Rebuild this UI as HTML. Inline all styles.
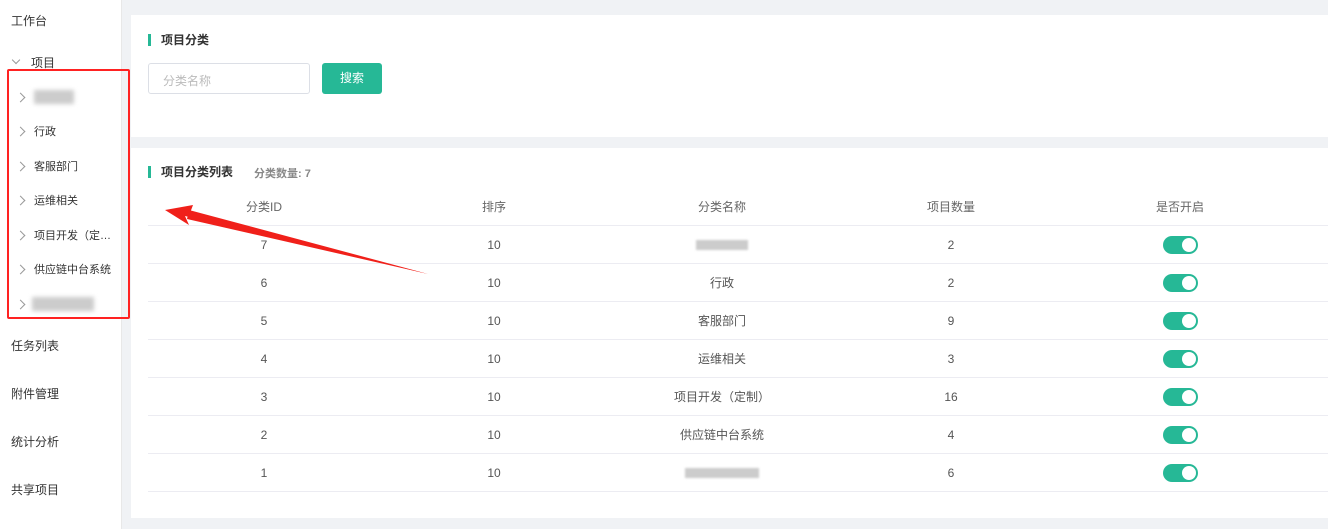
<!DOCTYPE html>
<html><head><meta charset="utf-8"><style>
*{margin:0;padding:0;box-sizing:border-box}
body{width:1328px;height:529px;overflow:hidden;background:#f0f2f5;font-family:"Liberation Sans","Noto Sans CJK SC",sans-serif;position:relative;color:#333}
.side{position:absolute;left:0;top:0;width:122px;height:529px;background:#fff;border-right:1px solid #e8e8e8}
.si{position:absolute;left:11px;font-size:12px;color:#333;line-height:16px}
.sub{position:absolute;left:34px;font-size:11px;color:#333;line-height:14px}
.chev{position:absolute;left:17px;width:7px;height:7px;border-right:1px solid #999;border-top:1px solid #999;transform:rotate(45deg)}
.blur{position:absolute;background:#ccc;filter:blur(2px)}
.card{position:absolute;left:131px;background:#fff;width:1197px}
.title{position:absolute;font-size:12px;font-weight:bold;color:#333;line-height:14px}
.bar{position:absolute;width:3px;height:12px;background:#26b896}
.row{position:absolute;left:148px;width:1180px;height:38px;border-bottom:1px solid #ececf2;font-size:12px;color:#555}
.row span{position:absolute;top:12px;line-height:14px;height:14px;transform:translateX(-50%);white-space:nowrap}
.row span i{vertical-align:top;margin-top:2px}
.tg{position:absolute;left:1015px;top:10px;width:35px;height:18px;border-radius:9px;background:#26b896}
.tg:after{content:"";position:absolute;right:2px;top:2px;width:14px;height:14px;border-radius:50%;background:#fff}
</style></head><body>
<div class="side">
<div class="si" style="top:13px">工作台</div>
<div style="position:absolute;left:13px;top:57px;width:6px;height:6px;border-right:1px solid #999;border-bottom:1px solid #999;transform:rotate(45deg)"></div>
<div class="si" style="top:55px;left:31px">项目</div>
<div class="chev" style="top:94px"></div><div class="blur" style="left:34px;top:90px;width:40px;height:14px"></div>
<div class="chev" style="top:128px"></div><div class="sub" style="top:125px">行政</div>
<div class="chev" style="top:163px"></div><div class="sub" style="top:160px">客服部门</div>
<div class="chev" style="top:197px"></div><div class="sub" style="top:194px">运维相关</div>
<div class="chev" style="top:232px"></div><div class="sub" style="top:229px">项目开发（定…</div>
<div class="chev" style="top:266px"></div><div class="sub" style="top:263px">供应链中台系统</div>
<div class="chev" style="top:301px"></div><div class="blur" style="left:32px;top:297px;width:62px;height:14px"></div>
<div class="si" style="top:338px">任务列表</div>
<div class="si" style="top:386px">附件管理</div>
<div class="si" style="top:434px">统计分析</div>
<div class="si" style="top:482px">共享项目</div>
</div>
<div class="card" style="top:15px;height:122px"></div>
<div class="bar" style="left:148px;top:34px"></div>
<div class="title" style="left:161px;top:33px">项目分类</div>
<div style="position:absolute;left:148px;top:63px;width:162px;height:31px;border:1px solid #dcdfe6;border-radius:3px;font-size:12px;color:#bbb;padding:8px 0 0 14px">分类名称</div>
<div style="position:absolute;left:322px;top:63px;width:60px;height:31px;background:#26b896;border-radius:3px;color:#fff;font-size:12px;text-align:center;line-height:31px">搜索</div>
<div class="card" style="top:148px;height:370px"></div>
<div class="bar" style="left:148px;top:166px"></div>
<div class="title" style="left:161px;top:165px">项目分类列表</div>
<div style="position:absolute;left:254px;top:165px;font-size:11px;font-weight:bold;color:#888">分类数量: 7</div>
<div class="row" style="top:188px"><span style="left:116px;color:#666">分类ID</span><span style="left:346px;color:#666">排序</span><span style="left:574px;color:#666">分类名称</span><span style="left:803px;color:#666">项目数量</span><span style="left:1032px;color:#666">是否开启</span></div>
<div class="row" style="top:226px"><span style="left:116px">7</span><span style="left:346px">10</span><span style="left:574px"><i class="blur" style="position:relative;display:inline-block;width:52px;height:10px;filter:blur(1px)"></i></span><span style="left:803px">2</span><div class="tg"></div></div>
<div class="row" style="top:264px"><span style="left:116px">6</span><span style="left:346px">10</span><span style="left:574px">行政</span><span style="left:803px">2</span><div class="tg"></div></div>
<div class="row" style="top:302px"><span style="left:116px">5</span><span style="left:346px">10</span><span style="left:574px">客服部门</span><span style="left:803px">9</span><div class="tg"></div></div>
<div class="row" style="top:340px"><span style="left:116px">4</span><span style="left:346px">10</span><span style="left:574px">运维相关</span><span style="left:803px">3</span><div class="tg"></div></div>
<div class="row" style="top:378px"><span style="left:116px">3</span><span style="left:346px">10</span><span style="left:574px">项目开发（定制）</span><span style="left:803px">16</span><div class="tg"></div></div>
<div class="row" style="top:416px"><span style="left:116px">2</span><span style="left:346px">10</span><span style="left:574px">供应链中台系统</span><span style="left:803px">4</span><div class="tg"></div></div>
<div class="row" style="top:454px"><span style="left:116px">1</span><span style="left:346px">10</span><span style="left:574px"><i class="blur" style="position:relative;display:inline-block;width:74px;height:10px;filter:blur(1px)"></i></span><span style="left:803px">6</span><div class="tg"></div></div>
<div style="position:absolute;left:7px;top:69px;width:123px;height:250px;border:2px solid #f22;border-radius:2px"></div>
<svg style="position:absolute;left:0;top:0" width="1328" height="529"><polygon points="428,274 185,216 189,225 165,210 193,205 190,213" fill="#f0201a"/><polygon points="428,274 189,210 187,219" fill="#f0201a"/></svg>
</body></html>
